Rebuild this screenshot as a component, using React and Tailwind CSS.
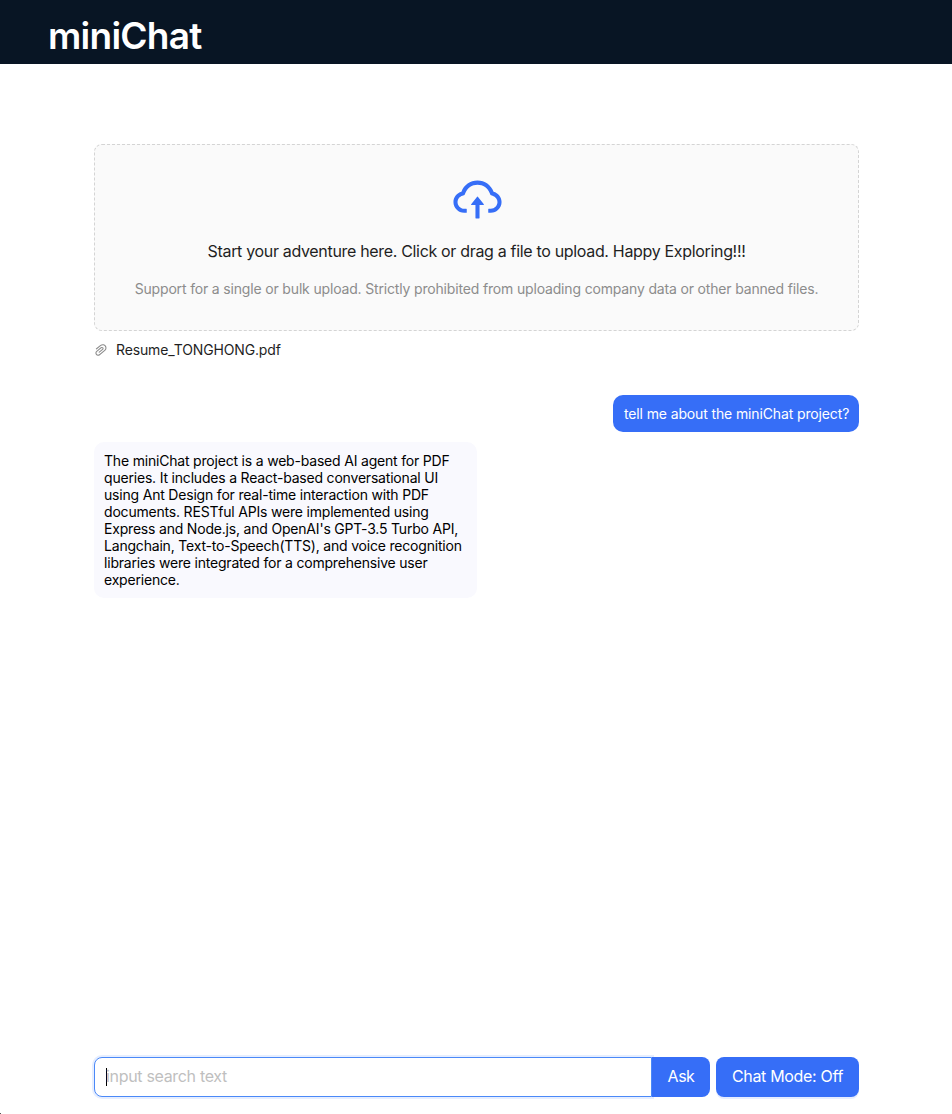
import { AiOutlineCloudUpload, AiOutlinePaperClip } from "react-icons/ai";

const answerLines = [
  "The miniChat project is a web-based AI agent for PDF",
  "queries. It includes a React-based conversational UI",
  "using Ant Design for real-time interaction with PDF",
  "documents. RESTful APIs were implemented using",
  "Express and Node.js, and OpenAI's GPT-3.5 Turbo API,",
  "Langchain, Text-to-Speech(TTS), and voice recognition",
  "libraries were integrated for a comprehensive user",
  "experience.",
];

function Header() {
  return (
    <header className="flex h-16 shrink-0 items-center bg-[#081524] px-12">
      <h1 className="pt-2 text-[37px] leading-[56px] font-semibold tracking-[-0.75px] whitespace-nowrap text-white">
        miniChat
      </h1>
    </header>
  );
}

function Uploader() {
  return (
    <section>
      <div className="flex h-[187px] flex-col items-center rounded-lg border border-dashed border-[#d4d4d4] bg-[#fafafa] pt-[27px] whitespace-nowrap">
        <AiOutlineCloudUpload className="ml-px size-[55px] shrink-0 text-[#366ef7]" />
        <p className="mt-3 text-[16px] leading-6 tracking-[-0.325px] text-[#1f1f1f]">
          Start your adventure here. Click or drag a file to upload. Happy Exploring!!!
        </p>
        <p className="mt-[15px] text-[14px] leading-[22px] tracking-[-0.167px] text-[#8c8c8c]">
          Support for a single or bulk upload. Strictly prohibited from uploading company data or other banned files.
        </p>
      </div>
      <div className="mt-2 flex h-[22px] items-center">
        <AiOutlinePaperClip className="-mx-px size-4 rotate-6 text-[#8c8c8c]" />
        <span className="pl-2 text-[14px] leading-[22px] tracking-[-0.14px] text-[#1f1f1f]">Resume_TONGHONG.pdf</span>
      </div>
    </section>
  );
}

function Conversation() {
  return (
    <section className="mt-[34px] flex flex-col gap-2.5 whitespace-nowrap">
      <div className="flex h-[37px] w-[246px] items-center self-end rounded-[10px] bg-[#366ef7] pl-[11px] text-[14px] leading-[17px] tracking-[-0.13px] text-white">
        tell me about the miniChat project?
      </div>
      <div className="h-[156px] w-[383px] rounded-[10px] bg-[#f9f9fe] p-2.5 text-[14px] leading-[17px] tracking-[-0.195px] text-black">
        {answerLines.map((line) => (
          <div key={line}>{line}</div>
        ))}
      </div>
    </section>
  );
}

function Composer() {
  return (
    <footer className="mt-auto mb-[17px] flex h-10 text-[16px] leading-6 tracking-[-0.32px] whitespace-nowrap">
      <div className="flex w-[558px] items-center rounded-l-lg border border-[#4b89f8] bg-white pl-[11px] shadow-[0_0_0_2px_rgba(5,90,255,0.1)]">
        <span className="-mr-px h-[18px] w-px bg-black" />
        <span className="pb-0.5 text-[#bfbfbf]">input search text</span>
      </div>
      <button className="w-[58px] rounded-r-lg bg-[#366ef7] pb-0.5 tracking-[-0.5px] text-white">Ask</button>
      <button className="ml-1.5 w-[143px] rounded-lg bg-[#366ef7] pb-0.5 text-white shadow-[0_2px_0_rgba(5,80,255,0.1)]">
        Chat Mode: Off
      </button>
    </footer>
  );
}

export default function App() {
  return (
    <div className="relative flex h-[1114px] w-[952px] flex-col overflow-hidden bg-white font-['Inter',sans-serif]">
      <Header />
      <main className="flex flex-1 flex-col pt-20 pr-[93px] pl-[94px]">
        <Uploader />
        <Conversation />
        <Composer />
      </main>
      <span className="absolute bottom-0 left-0 size-px bg-[#555555]" />
    </div>
  );
}
